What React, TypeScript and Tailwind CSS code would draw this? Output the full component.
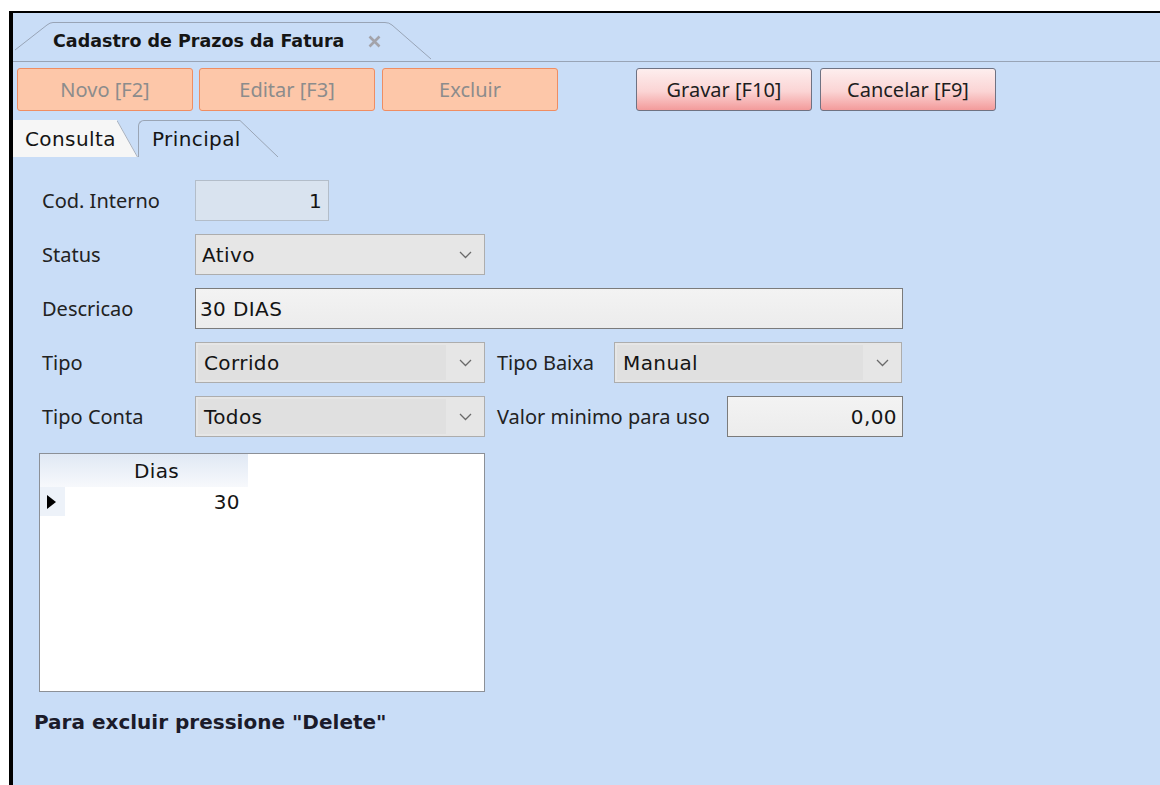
import React from 'react';

const labelFont = "font-['Noto_Sans',sans-serif] text-[20px] text-[#222]";
const valueFont = "font-['DejaVu_Sans',sans-serif] text-[20px] tracking-[0.4px] text-[#141414]";

function Chevron() {
  return (
    <svg width="13" height="8" viewBox="0 0 13 8" className="block">
      <polyline points="1,1 6.5,6.5 12,1" fill="none" stroke="#6a6a6a" strokeWidth="1.3" />
    </svg>
  );
}

function Select({ value, width, split = true }: { value: string; width: string; split?: boolean }) {
  return (
    <div className={`${width} h-full flex border border-[#adadad] bg-[#e6e6e6]`}>
      <div className={`flex-1 flex items-center pl-[6px] ${split ? 'bg-[#e0e0e0] my-[2px] ml-[2px]' : ''}`}>
        <span className={valueFont}>{value}</span>
      </div>
      <div className="w-[38px] flex items-center justify-center">
        <Chevron />
      </div>
    </div>
  );
}

function Field({ children }: { children: React.ReactNode }) {
  return <div className="h-[41px] flex items-center">{children}</div>;
}

function Label({ text, width }: { text: string; width: string }) {
  return <div className={`${width} pl-[3px] ${labelFont}`}>{text}</div>;
}

export default function App() {
  const salmon =
    "h-full w-[176px] rounded-[3px] border border-[#ef8d62] bg-[#fdc7a9] flex items-center justify-center font-['Noto_Sans',sans-serif] text-[20px] text-[#8c8c8c]";
  const pink =
    "h-full w-[176px] rounded-[3px] border border-[#6f7282] bg-[linear-gradient(to_bottom,#fdeeee,#fbd4d4_55%,#f39b9b)] flex items-center justify-center font-['Noto_Sans',sans-serif] text-[20px] text-[#1e1e1e]";

  return (
    <div className="w-[1160px] h-[785px] bg-white pt-[11px] pl-[9px] overflow-hidden">
      <div className="h-full border-t-2 border-l-4 border-black bg-[#c9ddf7] flex flex-col">
        {/* document tab strip */}
        <div className="h-[49px] shrink-0 border-b border-[#98a4b6] flex items-end pl-[2px]">
          <svg width="38" height="39" viewBox="0 0 38 39" className="block shrink-0">
            <path d="M0 28 L32 3 Q35 0.5 38 0.5" fill="none" stroke="#98a4b6" strokeWidth="1" />
          </svg>
          <div className="h-[39px] border-t border-[#98a4b6] flex items-center pb-[2px]">
            <span className="font-['DejaVu_Sans',sans-serif] font-bold text-[17.5px] text-[#151515]">
              Cadastro de Prazos da Fatura
            </span>
            <svg width="13" height="13" viewBox="0 0 13 13" className="ml-[24px] mr-[4px] block">
              <path d="M1.5 1.5 L11.5 11.5 M11.5 1.5 L1.5 11.5" stroke="#a3a3aa" strokeWidth="2.6" />
            </svg>
          </div>
          <svg width="46" height="39" viewBox="0 0 46 39" className="block shrink-0">
            <path d="M0 0.5 Q4 0.5 7 3 L46 37" fill="none" stroke="#98a4b6" strokeWidth="1" />
          </svg>
        </div>

        {/* toolbar */}
        <div className="h-[43px] mt-[6px] shrink-0 flex pl-[4px]">
          <button className={salmon}>Novo [F2]</button>
          <button className={`${salmon} ml-[6px]`}>Editar [F3]</button>
          <button className={`${salmon} ml-[7px]`}>Excluir</button>
          <button className={`${pink} ml-[78px]`}>Gravar [F10]</button>
          <button className={`${pink} ml-[8px]`}>Cancelar [F9]</button>
        </div>

        {/* page tabs */}
        <div className="h-[37px] mt-[9px] shrink-0 flex">
          <div className="w-[104px] bg-[#f6f6f6] flex items-center pl-[12px]">
            <span className={valueFont}>Consulta</span>
          </div>
          <svg width="21" height="37" viewBox="0 0 21 37" className="block shrink-0">
            <path d="M0 0 L21 37 L0 37 Z" fill="#f6f6f6" />
            <path d="M0 0.5 L20.5 37" fill="none" stroke="#a6b0bf" strokeWidth="1" />
          </svg>
          <div className="w-[102px] border-l border-t border-[#9aa5b5] rounded-tl-[6px] flex items-center pl-[13px]">
            <span className={valueFont}>Principal</span>
          </div>
          <svg width="38" height="37" viewBox="0 0 38 37" className="block shrink-0">
            <path d="M0 0.5 L38 37" fill="none" stroke="#9aa5b5" strokeWidth="1" />
          </svg>
        </div>

        {/* form */}
        <div className="mt-[23px] pl-[26px] flex flex-col">
          <div className="flex flex-col gap-[13px]">
            <Field>
              <Label text="Cod. Interno" width="w-[156px]" />
              <div className="w-[134px] h-full border border-[#b3bdc9] bg-[#d9e3ef] flex items-center justify-end pr-[6px]">
                <span className={valueFont}>1</span>
              </div>
            </Field>
            <Field>
              <Label text="Status" width="w-[156px]" />
              <Select value="Ativo" width="w-[290px]" split={false} />
            </Field>
            <Field>
              <Label text="Descricao" width="w-[156px]" />
              <div className="w-[708px] h-full border border-[#7b7b7b] bg-[linear-gradient(to_bottom,#f3f3f3,#ececec)] flex items-center pl-[4px]">
                <span className={valueFont}>30 DIAS</span>
              </div>
            </Field>
            <Field>
              <Label text="Tipo" width="w-[156px]" />
              <Select value="Corrido" width="w-[290px]" />
              <Label text="Tipo Baixa" width="w-[120px] ml-[9px]" />
              <Select value="Manual" width="w-[288px]" />
            </Field>
            <Field>
              <Label text="Tipo Conta" width="w-[156px]" />
              <Select value="Todos" width="w-[290px]" />
              <Label text="Valor minimo para uso" width="w-[233px] ml-[9px]" />
              <div className="w-[176px] h-full border border-[#7b7b7b] bg-[linear-gradient(to_bottom,#f3f3f3,#ececec)] flex items-center justify-end pr-[5px]">
                <span className={valueFont}>0,00</span>
              </div>
            </Field>
          </div>

          {/* days grid */}
          <div className="mt-[16px] w-[446px] h-[239px] border border-[#8c9097] bg-white">
            <div className="h-[33px] flex bg-[linear-gradient(to_bottom,#e0e8f4,#f7f9fc)] w-[208px]">
              <div className="w-[25px]" />
              <div className="flex-1 flex items-center justify-center">
                <span className={valueFont}>Dias</span>
              </div>
            </div>
            <div className="h-[29px] flex w-[208px]">
              <div className="w-[25px] bg-[#edf2f9] flex items-center pl-[7px]">
                <svg width="9" height="14" viewBox="0 0 9 14" className="block">
                  <path d="M0 0 L9 7 L0 14 Z" fill="#000" />
                </svg>
              </div>
              <div className="flex-1 flex items-center justify-end pr-[8px]">
                <span className={valueFont}>30</span>
              </div>
            </div>
          </div>

          <div className="mt-[15px] -ml-[5px] font-['DejaVu_Sans',sans-serif] font-bold text-[20px] text-[#1b1b2a]">
            Para excluir pressione "Delete"
          </div>
        </div>
      </div>
    </div>
  );
}
